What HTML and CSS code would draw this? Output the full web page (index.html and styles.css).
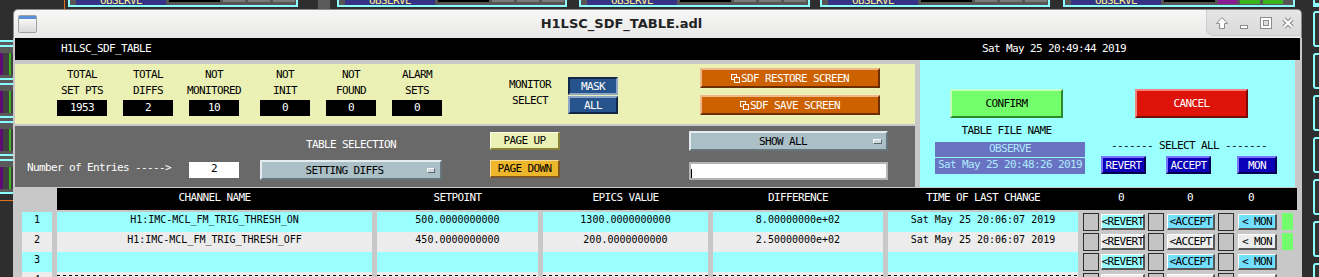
FILE: index.html
```html
<!DOCTYPE html>
<html lang="en">
<head>
    <meta charset="UTF-8">
    <meta name="viewport" content="width=device-width, initial-scale=1.0">
    <title>H1LSC_SDF_TABLE.adl</title>
    <link rel="stylesheet" href="styles.css">
</head>
<body>
    <!-- other screens peeking out on the desktop -->
    <div class="bg-win bw1"><span class="bw-name">OBSERVE</span><span class="bw-bar"></span><span class="bw-cell"></span><span class="bw-cell"></span><span class="bw-cell"></span></div>
    <div class="bg-win bw2"><span class="bw-name">OBSERVE</span><span class="bw-bar"></span><span class="bw-cell"></span><span class="bw-cell"></span><span class="bw-cell"></span></div>
    <div class="bg-win bw3"><span class="bw-name">OBSERVE</span><span class="bw-bar"></span><span class="bw-cell"></span><span class="bw-cell"></span><span class="bw-cell"></span></div>
    <div class="bg-win bw4"><span class="bw-name">OBSERVE</span><span class="bw-bar"></span><span class="bw-cell"></span><span class="bw-cell"></span><span class="bw-cell"></span></div>
    <div class="bg-win bw5"><span class="bw-name">OBSERVE</span><span class="bw-bar"></span><span class="bw-cell purple"></span><span class="bw-cell green"></span><span class="bw-cell green"></span></div>
    <div class="bg-win bw6"></div>
    <div class="bw-block"></div>
    <div class="bw-line"></div>

    <div class="left-strip">
        <div class="ls-unit"><i class="ls-cyan"></i><i class="ls-cyan"></i><div class="ls-chan"><b class="ls-purple"></b><b class="ls-green"></b></div></div>
        <div class="ls-unit"><i class="ls-cyan"></i><i class="ls-cyan"></i><div class="ls-chan"><b class="ls-purple"></b><b class="ls-green"></b></div></div>
        <div class="ls-unit"><i class="ls-cyan"></i><i class="ls-cyan"></i><div class="ls-chan"><b class="ls-purple"></b><b class="ls-green"></b></div></div>
        <div class="ls-unit"><i class="ls-cyan"></i><i class="ls-cyan"></i><div class="ls-chan"><b class="ls-purple"></b><b class="ls-green"></b></div></div>
        <i class="ls-cyan"></i>
        <i class="ls-orange"></i>
    </div>

    <div class="right-strip">
        <div class="rs-box"></div><div class="rs-box"></div><div class="rs-box"></div><div class="rs-box"></div>
        <div class="rs-box"></div><div class="rs-box"></div><div class="rs-box"></div><div class="rs-box"></div>
    </div>

    <div class="window">
        <div class="titlebar">
            <svg class="tb-icon" width="19" height="18" viewBox="0 0 19 18">
                <defs>
                    <linearGradient id="ig" x1="0" y1="0" x2="0" y2="1">
                        <stop offset="0" stop-color="#ffffff"/>
                        <stop offset="1" stop-color="#d8d8d8"/>
                    </linearGradient>
                </defs>
                <rect x="0.5" y="0.5" width="18" height="17" rx="1" fill="url(#ig)" stroke="#a0a0a0"/>
                <rect x="1" y="1" width="17" height="3" fill="#5b8fd6"/>
            </svg>
            <div class="tb-title">H1LSC_SDF_TABLE.adl</div>
            <div class="tb-buttons">
                <span class="tb-btn"><svg width="14" height="14" viewBox="0 0 14 14"><path d="M7 1.5 L12.5 7.5 H9.5 V12.5 H4.5 V7.5 H1.5 Z" fill="#fff" stroke="#8c8c8c"/></svg></span>
                <span class="tb-btn"><svg width="14" height="14" viewBox="0 0 14 14"><rect x="3.5" y="9.5" width="7" height="3" fill="#fff" stroke="#8c8c8c"/></svg></span>
                <span class="tb-btn"><svg width="14" height="14" viewBox="0 0 14 14"><rect x="1.5" y="1.5" width="11" height="11" fill="#fff" stroke="#8c8c8c"/><rect x="4.5" y="4.5" width="5" height="5" fill="#dedede" stroke="#8c8c8c"/></svg></span>
                <span class="tb-btn"><svg width="14" height="14" viewBox="0 0 14 14"><path d="M3 3 L11 11 M11 3 L3 11" stroke="#8c8c8c" stroke-width="4.5"/><path d="M3 3 L11 11 M11 3 L3 11" stroke="#fff" stroke-width="2.2"/></svg></span>
            </div>
        </div>

        <div class="content">
            <div class="topbar">
                <span class="screen-name">H1LSC_SDF_TABLE</span>
                <span class="screen-date">Sat May 25 20:49:44 2019</span>
            </div>

            <div class="main">
                <div class="left-col">
                    <div class="panel-yellow">
                        <div class="stats">
                            <div class="stat"><div class="lbl">TOTAL</div><div class="lbl">SET PTS</div><div class="val">1953</div></div>
                            <div class="stat"><div class="lbl">TOTAL</div><div class="lbl">DIFFS</div><div class="val">2</div></div>
                            <div class="stat"><div class="lbl">NOT</div><div class="lbl">MONITORED</div><div class="val">10</div></div>
                            <div class="stat"><div class="lbl">NOT</div><div class="lbl">INIT</div><div class="val">0</div></div>
                            <div class="stat"><div class="lbl">NOT</div><div class="lbl">FOUND</div><div class="val">0</div></div>
                            <div class="stat"><div class="lbl">ALARM</div><div class="lbl">SETS</div><div class="val">0</div></div>
                        </div>
                        <div class="mon-label"><div>MONITOR</div><div>SELECT</div></div>
                        <div class="choice">
                            <div class="choice-btn on">MASK</div>
                            <div class="choice-btn">ALL</div>
                        </div>
                        <div class="related">
                            <div class="rel-btn"><svg width="9" height="9" viewBox="0 0 9 9"><rect x="0.5" y="0.5" width="5" height="5" fill="none" stroke="#fff"/><rect x="3.5" y="3.5" width="5" height="5" fill="#cd6100" stroke="#fff"/></svg>SDF RESTORE SCREEN</div>
                            <div class="rel-btn"><svg width="9" height="9" viewBox="0 0 9 9"><rect x="0.5" y="0.5" width="5" height="5" fill="none" stroke="#fff"/><rect x="3.5" y="3.5" width="5" height="5" fill="#cd6100" stroke="#fff"/></svg>SDF SAVE SCREEN</div>
                        </div>
                    </div>

                    <div class="panel-gray">
                        <div class="entries-label">Number of Entries -----&gt;</div>
                        <div class="entries-val">2</div>
                        <div class="table-select">
                            <div class="ts-label">TABLE SELECTION</div>
                            <div class="menu"><span class="menu-text">SETTING DIFFS</span><i class="menu-mark"></i></div>
                        </div>
                        <div class="paging">
                            <div class="page-btn up">PAGE UP</div>
                            <div class="page-btn down">PAGE DOWN</div>
                        </div>
                        <div class="filter">
                            <div class="menu wide"><span class="menu-text">SHOW ALL</span><i class="menu-mark"></i></div>
                            <div class="text-entry"><i class="caret"></i></div>
                        </div>
                    </div>
                </div>

                <div class="panel-cyan">
                    <div class="cy-left">
                        <div class="big-btn confirm">CONFIRM</div>
                        <div class="file-label">TABLE FILE NAME</div>
                        <div class="file-name">OBSERVE</div>
                        <div class="file-date">Sat May 25 20:48:26 2019</div>
                    </div>
                    <div class="cy-right">
                        <div class="big-btn cancel">CANCEL</div>
                        <div class="select-all">------- SELECT ALL -------</div>
                        <div class="sa-buttons">
                            <div class="sa-btn revert">REVERT</div>
                            <div class="sa-btn accept">ACCEPT</div>
                            <div class="sa-btn mon">MON</div>
                        </div>
                    </div>
                </div>
            </div>

            <div class="table">
                <div class="thead">
                    <span class="c-ch">CHANNEL NAME</span>
                    <span class="c-sp">SETPOINT</span>
                    <span class="c-ev">EPICS VALUE</span>
                    <span class="c-df">DIFFERENCE</span>
                    <span class="c-tm">TIME OF LAST CHANGE</span>
                    <span class="cnt c1">0</span>
                    <span class="cnt c2">0</span>
                    <span class="cnt c3">0</span>
                </div>

                <div class="row hi">
                    <span class="cell c-num">1</span>
                    <span class="cell c-ch">H1:IMC-MCL_FM_TRIG_THRESH_ON</span>
                    <span class="cell c-sp">500.0000000000</span>
                    <span class="cell c-ev">1300.0000000000</span>
                    <span class="cell c-df">8.00000000e+02</span>
                    <span class="cell c-tm">Sat May 25 20:06:07 2019</span>
                    <div class="ctl">
                        <i class="box"></i><span class="rb b-rev">&lt;REVERT</span>
                        <i class="box"></i><span class="rb b-acc">&lt;ACCEPT</span>
                        <i class="box"></i><span class="rb b-mon">&lt; MON</span>
                        <i class="led"></i>
                    </div>
                </div>
                <div class="row lo">
                    <span class="cell c-num">2</span>
                    <span class="cell c-ch">H1:IMC-MCL_FM_TRIG_THRESH_OFF</span>
                    <span class="cell c-sp">450.0000000000</span>
                    <span class="cell c-ev">200.0000000000</span>
                    <span class="cell c-df">2.50000000e+02</span>
                    <span class="cell c-tm">Sat May 25 20:06:07 2019</span>
                    <div class="ctl">
                        <i class="box"></i><span class="rb b-rev">&lt;REVERT</span>
                        <i class="box"></i><span class="rb b-acc">&lt;ACCEPT</span>
                        <i class="box"></i><span class="rb b-mon">&lt; MON</span>
                        <i class="led"></i>
                    </div>
                </div>
                <div class="row hi">
                    <span class="cell c-num">3</span>
                    <span class="cell c-ch"></span>
                    <span class="cell c-sp"></span>
                    <span class="cell c-ev"></span>
                    <span class="cell c-df"></span>
                    <span class="cell c-tm"></span>
                    <div class="ctl">
                        <i class="box"></i><span class="rb b-rev">&lt;REVERT</span>
                        <i class="box"></i><span class="rb b-acc">&lt;ACCEPT</span>
                        <i class="box"></i><span class="rb b-mon">&lt; MON</span>
                    </div>
                </div>
                <div class="row lo dashed">
                    <span class="cell c-num">4</span>
                    <span class="cell c-ch"></span>
                    <span class="cell c-sp"></span>
                    <span class="cell c-ev"></span>
                    <span class="cell c-df"></span>
                    <span class="cell c-tm"></span>
                    <div class="ctl">
                        <i class="box"></i><span class="rb b-rev">&lt;REVERT</span>
                        <i class="box"></i><span class="rb b-acc">&lt;ACCEPT</span>
                        <i class="box"></i><span class="rb b-mon">&lt; MON</span>
                    </div>
                </div>
            </div>
        </div>
    </div>
</body>
</html>
```

FILE: styles.css
```css
body {
    margin: 0;
    width: 1319px;
    height: 277px;
    overflow: hidden;
    position: relative;
    background: #2e2e2e;
    font-family: "DejaVu Sans Mono", monospace;
    font-size: 11px;
    letter-spacing: -0.62px;
}

/* desktop behind the window */
.bg-win {
    position: absolute;
    top: -14px;
    height: 21px;
    box-sizing: border-box;
    border: 2px solid #8cffff;
    background: #555;
    display: flex;
    align-items: flex-start;
    padding-top: 12px;
    overflow: hidden;
}
.bw1 { left: 68px; width: 230px; }
.bw2 { left: 337px; width: 230px; }
.bw3 { left: 579px; width: 231px; }
.bw4 { left: 820px; width: 230px; }
.bw5 { left: 1063px; width: 232px; }
.bw6 { left: 1313px; width: 40px; }
.bw-name {
    margin-left: 6px;
    width: 90px;
    height: 10px;
    background: #343386;
    color: #f4f08c;
    text-align: center;
    line-height: 2px;
}
.bw-bar {
    margin-left: 3px;
    width: 51px;
    height: 2px;
    background: #000;
}
.bw-cell {
    margin-left: 3px;
    width: 22px;
    height: 2px;
    background: #7a7a7a;
}
.bw-cell.purple { background: #8b1a96; width: 19px; height: 4px; }
.bw-cell.green { background: #3cb420; width: 20px; height: 4px; }
.bw-block {
    position: absolute;
    left: 318px;
    top: 0;
    width: 12px;
    height: 9px;
    background: #5a5a5a;
}
.bw-line {
    position: absolute;
    left: 64px;
    top: 0;
    width: 1px;
    height: 9px;
    background: #e07020;
}

.left-strip {
    position: absolute;
    left: 0;
    top: 40px;
    width: 13px;
    display: flex;
    flex-direction: column;
}
.ls-unit {
    display: flex;
    flex-direction: column;
    background: #5a5a5a;
    padding-bottom: 3px;
}
.ls-cyan {
    display: block;
    height: 2px;
    margin-bottom: 3px;
    background: #8cffff;
}
.ls-chan {
    display: flex;
    height: 22px;
    margin-top: 3px;
    background: #404040;
}
.ls-purple { width: 3px; background: #610a75; }
.ls-green { width: 2px; margin-left: 6px; background: #3cb420; }
.ls-orange {
    display: block;
    height: 1px;
    margin-top: 3px;
    background: #e07020;
}

.right-strip {
    position: absolute;
    left: 1313px;
    top: -31px;
    display: flex;
    flex-direction: column;
    gap: 6px;
}
.rs-box {
    width: 20px;
    height: 36px;
    box-sizing: border-box;
    border: 2px solid #8cffff;
    border-radius: 3px;
    background: #333;
}

/* the MEDM window */
.window {
    position: absolute;
    left: 13px;
    top: 9px;
    width: 1289px;
}
.titlebar {
    display: flex;
    height: 29px;
    box-sizing: border-box;
    border: 1px solid #8a8a8a;
    border-bottom: none;
    border-radius: 5px 5px 0 0;
    background: linear-gradient(#f7f7f6, #e8e8e7);
}
.tb-icon {
    margin: 5px 0 0 4px;
}
.tb-title {
    flex: 1;
    text-align: center;
    font: bold 13px "DejaVu Sans", sans-serif;
    letter-spacing: 0;
    line-height: 28px;
    color: #222;
}
.tb-buttons {
    display: flex;
    align-items: center;
    width: 95px;
    height: 26px;
    box-sizing: border-box;
    padding-left: 4px;
    background: linear-gradient(#e6e6e6, #d9d9d9);
    border-left: 1px solid #cdcdcd;
    border-bottom: 1px solid #cdcdcd;
    border-radius: 0 4px 0 7px;
}
.tb-btn {
    width: 22px;
    display: flex;
    justify-content: center;
}

.content {
    background: #c8c8c8;
    padding: 0 2px;
    height: 239px;
    overflow: hidden;
}
.topbar {
    display: flex;
    height: 22px;
    background: #000;
    color: #fff;
    line-height: 21px;
}
.screen-name { margin-left: 46px; }
.screen-date { margin-left: auto; margin-right: 174px; }

.main {
    display: flex;
    gap: 5px;
    height: 127px;
}
.left-col {
    width: 900px;
    padding-top: 4px;
    display: flex;
    flex-direction: column;
    gap: 2px;
}

/* yellow summary panel */
.panel-yellow {
    height: 60px;
    background: #ebf1b5;
    display: flex;
    align-items: flex-start;
}
.stats {
    display: flex;
    gap: 16px;
    margin: 3px 0 0 42px;
}
.stat {
    width: 50px;
    display: flex;
    flex-direction: column;
    align-items: center;
    white-space: nowrap;
}
.stat:nth-child(4) { margin-left: 5px; }
.lbl { line-height: 16px; }
.val {
    align-self: stretch;
    margin-top: 1px;
    height: 16px;
    line-height: 16px;
    background: #000;
    color: #fff;
    text-align: center;
}
.mon-label {
    margin: 13px 0 0 67px;
    width: 42px;
    text-align: center;
    line-height: 16px;
    white-space: nowrap;
}
.choice {
    margin: 13px 0 0 17px;
    width: 50px;
    display: flex;
    flex-direction: column;
    gap: 1px;
}
.choice-btn {
    height: 18px;
    box-sizing: border-box;
    display: flex;
    align-items: center;
    justify-content: center;
    background: #27548d;
    color: #fff;
    border: 2px solid;
    border-color: #8ea6c6 #12284a #12284a #8ea6c6;
}
.choice-btn.on {
    border-color: #12284a #8ea6c6 #8ea6c6 #12284a;
}
.related {
    margin: 4px 0 0 82px;
    width: 180px;
    display: flex;
    flex-direction: column;
    gap: 7px;
}
.rel-btn {
    height: 20px;
    box-sizing: border-box;
    display: flex;
    align-items: center;
    justify-content: center;
    background: #cd6100;
    color: #fff;
    border: 2px solid;
    border-color: #f2b789 #6a2e00 #6a2e00 #f2b789;
    white-space: nowrap;
}
.rel-btn svg { margin-right: 1px; }

/* gray control panel */
.panel-gray {
    height: 61px;
    background: #696969;
    display: flex;
    align-items: flex-start;
    color: #fff;
}
.entries-label {
    margin: 34px 0 0 12px;
    line-height: 16px;
    white-space: nowrap;
}
.entries-val {
    margin: 36px 0 0 18px;
    width: 50px;
    height: 16px;
    line-height: 14px;
    background: #fff;
    color: #000;
    text-align: center;
}
.table-select {
    margin: 11px 0 0 21px;
    width: 182px;
}
.ts-label {
    line-height: 16px;
    text-align: center;
}
.menu {
    margin-top: 7px;
    height: 20px;
    box-sizing: border-box;
    display: flex;
    align-items: center;
    background: #abbfc7;
    color: #000;
    border: 2px solid;
    border-color: #e4ecef #66767c #66767c #e4ecef;
}
.menu-text {
    flex: 1;
    text-align: center;
}
.menu-mark {
    width: 8px;
    height: 5px;
    margin-right: 5px;
    box-sizing: border-box;
    background: #cfdade;
    border: 1px solid;
    border-color: #f4f8f9 #5a686e #5a686e #f4f8f9;
}
.paging {
    margin: 6px 0 0 48px;
    width: 70px;
    display: flex;
    flex-direction: column;
    gap: 10px;
}
.page-btn {
    height: 18px;
    box-sizing: border-box;
    display: flex;
    align-items: center;
    justify-content: center;
    color: #000;
    border-style: solid;
    border-width: 1px 2px 2px 1px;
}
.page-btn.up {
    background: #ebf1b5;
    border-color: #fbfde8 #8b8239 #8b8239 #fbfde8;
}
.page-btn.down {
    background: #eeb62b;
    border-color: #f8dc98 #7d5627 #7d5627 #f8dc98;
}
.filter {
    margin: 5px 0 0 129px;
    width: 199px;
}
.filter .menu { margin-top: 0; }
.filter .menu-mark { margin-right: 4px; width: 9px; }
.filter .menu-text { padding-left: 2px; }
.text-entry {
    margin-top: 11px;
    height: 18px;
    box-sizing: border-box;
    background: #fff;
    border: 2px solid #b4b4b4;
    display: flex;
    align-items: flex-end;
}
.caret {
    width: 1px;
    height: 9px;
    background: #000;
}

/* cyan confirm panel */
.panel-cyan {
    width: 375px;
    box-sizing: border-box;
    padding-left: 15px;
    background: #99ffff;
    display: flex;
    gap: 16px;
}
.cy-left { width: 150px; }
.cy-right { width: 176px; }
.big-btn {
    width: 113px;
    height: 29px;
    box-sizing: border-box;
    margin-top: 29px;
    display: flex;
    align-items: center;
    justify-content: center;
    border: 2px solid;
}
.confirm {
    margin-left: 15px;
    background: #73ff6b;
    color: #000;
    border-color: #c4ffc0 #2e8a26 #2e8a26 #c4ffc0;
}
.cancel {
    margin-left: 34px;
    background: #de1309;
    color: #fff;
    border-color: #f2827c #7a0a04 #7a0a04 #f2827c;
}
.file-label {
    margin-top: 5px;
    padding-right: 7px;
    line-height: 16px;
    text-align: center;
    white-space: nowrap;
}
.file-name, .file-date {
    background: #6a73c1;
    color: #aeeaff;
    text-align: center;
    white-space: nowrap;
}
.file-name {
    margin-top: 3px;
    height: 15px;
    line-height: 13px;
}
.file-date {
    margin-top: 1px;
    height: 16px;
    line-height: 14px;
}
.select-all {
    margin-top: 20px;
    line-height: 16px;
    text-align: center;
    white-space: nowrap;
}
.sa-buttons {
    margin-top: 2px;
    display: flex;
}
.sa-btn {
    height: 18px;
    box-sizing: border-box;
    display: flex;
    align-items: center;
    justify-content: center;
    background: #0a00b8;
    color: #fff;
    border: 2px solid;
    border-color: #7a74ff #00004e #00004e #7a74ff;
}
.revert { width: 45px; }
.accept { width: 45px; margin-left: 20px; }
.mon { width: 40px; margin-left: 26px; }

/* setpoint table */
.table {
    padding-top: 1px;
}
.thead {
    display: flex;
    gap: 5px;
    margin-left: 42px;
    width: 1240px;
    height: 22px;
    background: #000;
    color: #fff;
    line-height: 20px;
    white-space: nowrap;
}
.c-num { width: 30px; }
.c-ch { width: 315px; }
.c-sp { width: 161px; }
.c-ev { width: 165px; }
.c-df { width: 170px; }
.c-tm { width: 190px; }
.thead span { text-align: center; flex: none; }
.thead .cnt { margin-left: -5px; }
.thead .c1 { width: 86px; }
.thead .c2 { width: 52px; }
.thead .c3 { width: 70px; }

.row {
    display: flex;
    gap: 5px;
    height: 20px;
    padding-left: 7px;
}
.thead + .row { margin-top: 2px; }
.cell {
    flex: none;
    text-align: center;
    font-size: 10px;
    letter-spacing: 0;
    line-height: 15px;
    white-space: nowrap;
    overflow: hidden;
}
.row.hi .cell { background: #99ffff; }
.row.lo .cell { background: #ececec; }
.row.dashed .cell:not(.c-num) {
    background: linear-gradient(90deg, #000 50%, transparent 50%) 0 3px / 6px 1px repeat-x, #ececec;
}

.ctl {
    display: flex;
    align-items: flex-start;
}
.box {
    width: 16px;
    height: 18px;
    margin-top: 1px;
    box-sizing: border-box;
    background: #c4c4c4;
    border: 1px solid #2d2d2d;
}
.rb {
    height: 16px;
    margin: 2px 0 0 2px;
    box-sizing: border-box;
    display: flex;
    align-items: center;
    justify-content: center;
    white-space: nowrap;
    border-style: solid;
    border-width: 1px 2px 2px 1px;
    border-color: #fff #555 #555 #fff;
    background: #ececec;
    color: #000;
}
.b-rev { width: 44px; margin-right: 3px; }
.b-acc { width: 48px; margin-left: 3px; margin-right: 3px; }
.b-mon { width: 39px; margin-left: 4px; }
.row.hi .b-rev { background: #99ffff; }
.row.hi .b-acc, .row.hi .b-mon { background: #73dfff; }
.led {
    width: 11px;
    height: 17px;
    margin: 1px 0 0 5px;
    background: #73ff6b;
}
```
